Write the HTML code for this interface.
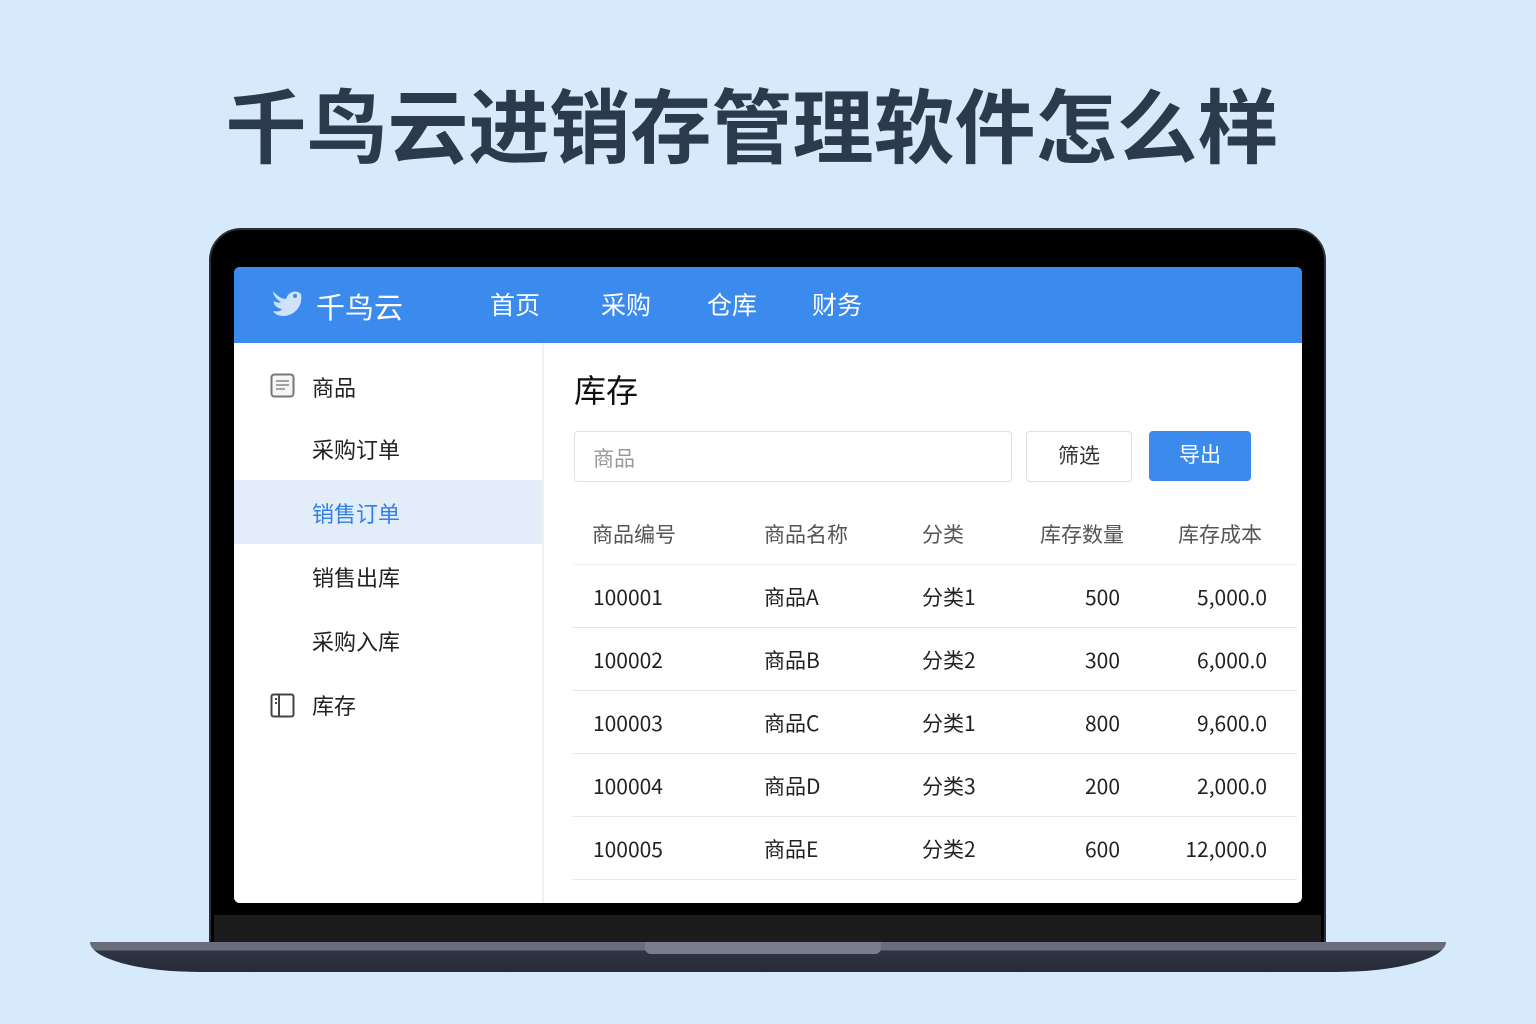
<!DOCTYPE html>
<html><head><meta charset="utf-8"><style>
body{margin:0;width:1536px;height:1024px;background:#d6eafb;font-family:"Liberation Sans","Noto Sans CJK SC",sans-serif;position:relative;overflow:hidden}
.abs{position:absolute}
.title{left:-16px;width:1536px;top:80px;text-align:center;font-size:81px;font-weight:bold;color:#2b3a4c;letter-spacing:0;line-height:100px}
.bezel{left:209px;top:228px;width:1117px;height:716px;background:#000;border-radius:32px 32px 0 0;border:2px solid #2a2f3a;box-sizing:border-box}
.chin{left:214px;top:915px;width:1107px;height:28px;background:#1c1c1c}
.base{left:90px;top:942px;width:1356px;height:30px;background:linear-gradient(#6a6e7c 0,#6a6e7c 8px,#2f3444 9px,#262b3a 100%);border-radius:0 0 110px 110px/0 0 30px 30px}
.notch{left:645px;top:942px;width:236px;height:12px;background:#7a7e8c;border-radius:0 0 6px 6px}
.screen{left:234px;top:267px;width:1068px;height:636px;background:#fff;border-radius:6px;overflow:hidden}
.hdr{left:0;top:0;width:1068px;height:76px;background:#3b8bef;color:#fff}
.hdr span{position:absolute;top:20px;font-size:25px}
.side{left:0;top:76px;width:308px;height:560px;border-right:2px solid #eef0f3;background:#fff}
.si{position:absolute;left:78px;font-size:22px;color:#222}
.sel{left:0;top:137px;width:308px;height:64px;background:#e3edf9}
.th,.td{position:absolute;font-size:21px;font-family:"Noto Sans CJK SC",sans-serif;line-height:30px}
.th{color:#555}.td{color:#222}
.line{position:absolute;left:339px;width:724px;height:1px;background:#e8e8e8}
</style></head><body>
<div class="abs title">千鸟云进销存管理软件怎么样</div>
<div class="abs bezel"></div>
<div class="abs chin"></div>
<div class="abs base"></div>
<div class="abs notch"></div>
<div class="abs screen">
 <div class="abs hdr">
  <svg style="position:absolute;left:36px;top:20px" width="34" height="32" viewBox="0 0 34 32"><path d="M3 4 C8 10 12 12 16 12 C18 5 26 2 31 7 C33 18 26 28 14 29 C7 29 4 26 3 24 C8 25 11 24 12 22 C6 21 3 17 4 14 C7 16 10 16 11 15 C6 12 3 8 3 4Z" fill="#cfe2fb"/><circle cx="25" cy="9" r="2" fill="#3b8bef"/></svg>
  <span style="left:82px;font-size:29px;top:18px">千鸟云</span>
  <span style="left:256px;top:19px">首页</span><span style="left:367px;top:19px">采购</span><span style="left:473px;top:19px">仓库</span><span style="left:578px;top:19px">财务</span>
 </div>
 <div class="abs side">
  <div class="abs sel"></div>
  <svg style="position:absolute;left:36px;top:30px" width="25" height="25" viewBox="0 0 25 25"><rect x="1.5" y="1.5" width="22" height="22" rx="3" fill="#f4f5f7" stroke="#777" stroke-width="2"/><path d="M6 8h13M6 12h13M6 16h9" stroke="#888" stroke-width="1.5"/></svg>
  <div class="si" style="top:28px">商品</div>
  <div class="si" style="top:90px">采购订单</div>
  <div class="si" style="top:154px;color:#2f80e8">销售订单</div>
  <div class="si" style="top:218px">销售出库</div>
  <div class="si" style="top:282px">采购入库</div>
  <svg style="position:absolute;left:36px;top:350px" width="25" height="25" viewBox="0 0 25 25"><rect x="1.5" y="1.5" width="22" height="22" rx="2" fill="#fff" stroke="#444" stroke-width="2"/><path d="M9 2v21M5 6h2M5 10h2" stroke="#444" stroke-width="2"/></svg>
  <div class="si" style="top:346px">库存</div>
 </div>
 <div class="abs" style="left:340px;top:99px;font-size:32px;color:#111">库存</div>
 <div class="abs" style="left:340px;top:164px;width:436px;height:49px;border:1px solid #dcdfe4;border-radius:4px"><span style="position:absolute;left:18px;top:11px;font-size:21px;color:#999">商品</span></div>
 <div class="abs" style="left:792px;top:164px;width:104px;height:49px;border:1px solid #dcdfe4;border-radius:4px;text-align:center;line-height:49px;font-size:21px;color:#333">筛选</div>
 <div class="abs" style="left:915px;top:164px;width:102px;height:50px;background:#3b8bef;border-radius:4px;text-align:center;line-height:50px;font-size:21px;color:#fff">导出</div>
 <div class="th" style="left:358px;top:252px">商品编号</div>
 <div class="th" style="left:530px;top:252px">商品名称</div>
 <div class="th" style="left:688px;top:252px">分类</div>
 <div class="th" style="left:806px;top:252px">库存数量</div>
 <div class="th" style="left:944px;top:252px">库存成本</div>
 <div class="line" style="top:297px;background:#f0f0f0"></div>
 <div class="td" style="left:359px;top:315px">100001</div><div class="td" style="left:530px;top:315px">商品A</div><div class="td" style="left:688px;top:315px">分类1</div><div class="td" style="right:182px;top:315px">500</div><div class="td" style="right:35px;top:315px">5,000.0</div>
 <div class="line" style="top:360px"></div>
 <div class="td" style="left:359px;top:378px">100002</div><div class="td" style="left:530px;top:378px">商品B</div><div class="td" style="left:688px;top:378px">分类2</div><div class="td" style="right:182px;top:378px">300</div><div class="td" style="right:35px;top:378px">6,000.0</div>
 <div class="line" style="top:423px"></div>
 <div class="td" style="left:359px;top:441px">100003</div><div class="td" style="left:530px;top:441px">商品C</div><div class="td" style="left:688px;top:441px">分类1</div><div class="td" style="right:182px;top:441px">800</div><div class="td" style="right:35px;top:441px">9,600.0</div>
 <div class="line" style="top:486px"></div>
 <div class="td" style="left:359px;top:504px">100004</div><div class="td" style="left:530px;top:504px">商品D</div><div class="td" style="left:688px;top:504px">分类3</div><div class="td" style="right:182px;top:504px">200</div><div class="td" style="right:35px;top:504px">2,000.0</div>
 <div class="line" style="top:549px"></div>
 <div class="td" style="left:359px;top:567px">100005</div><div class="td" style="left:530px;top:567px">商品E</div><div class="td" style="left:688px;top:567px">分类2</div><div class="td" style="right:182px;top:567px">600</div><div class="td" style="right:35px;top:567px">12,000.0</div>
 <div class="line" style="top:612px"></div>
</div>
</body></html>
